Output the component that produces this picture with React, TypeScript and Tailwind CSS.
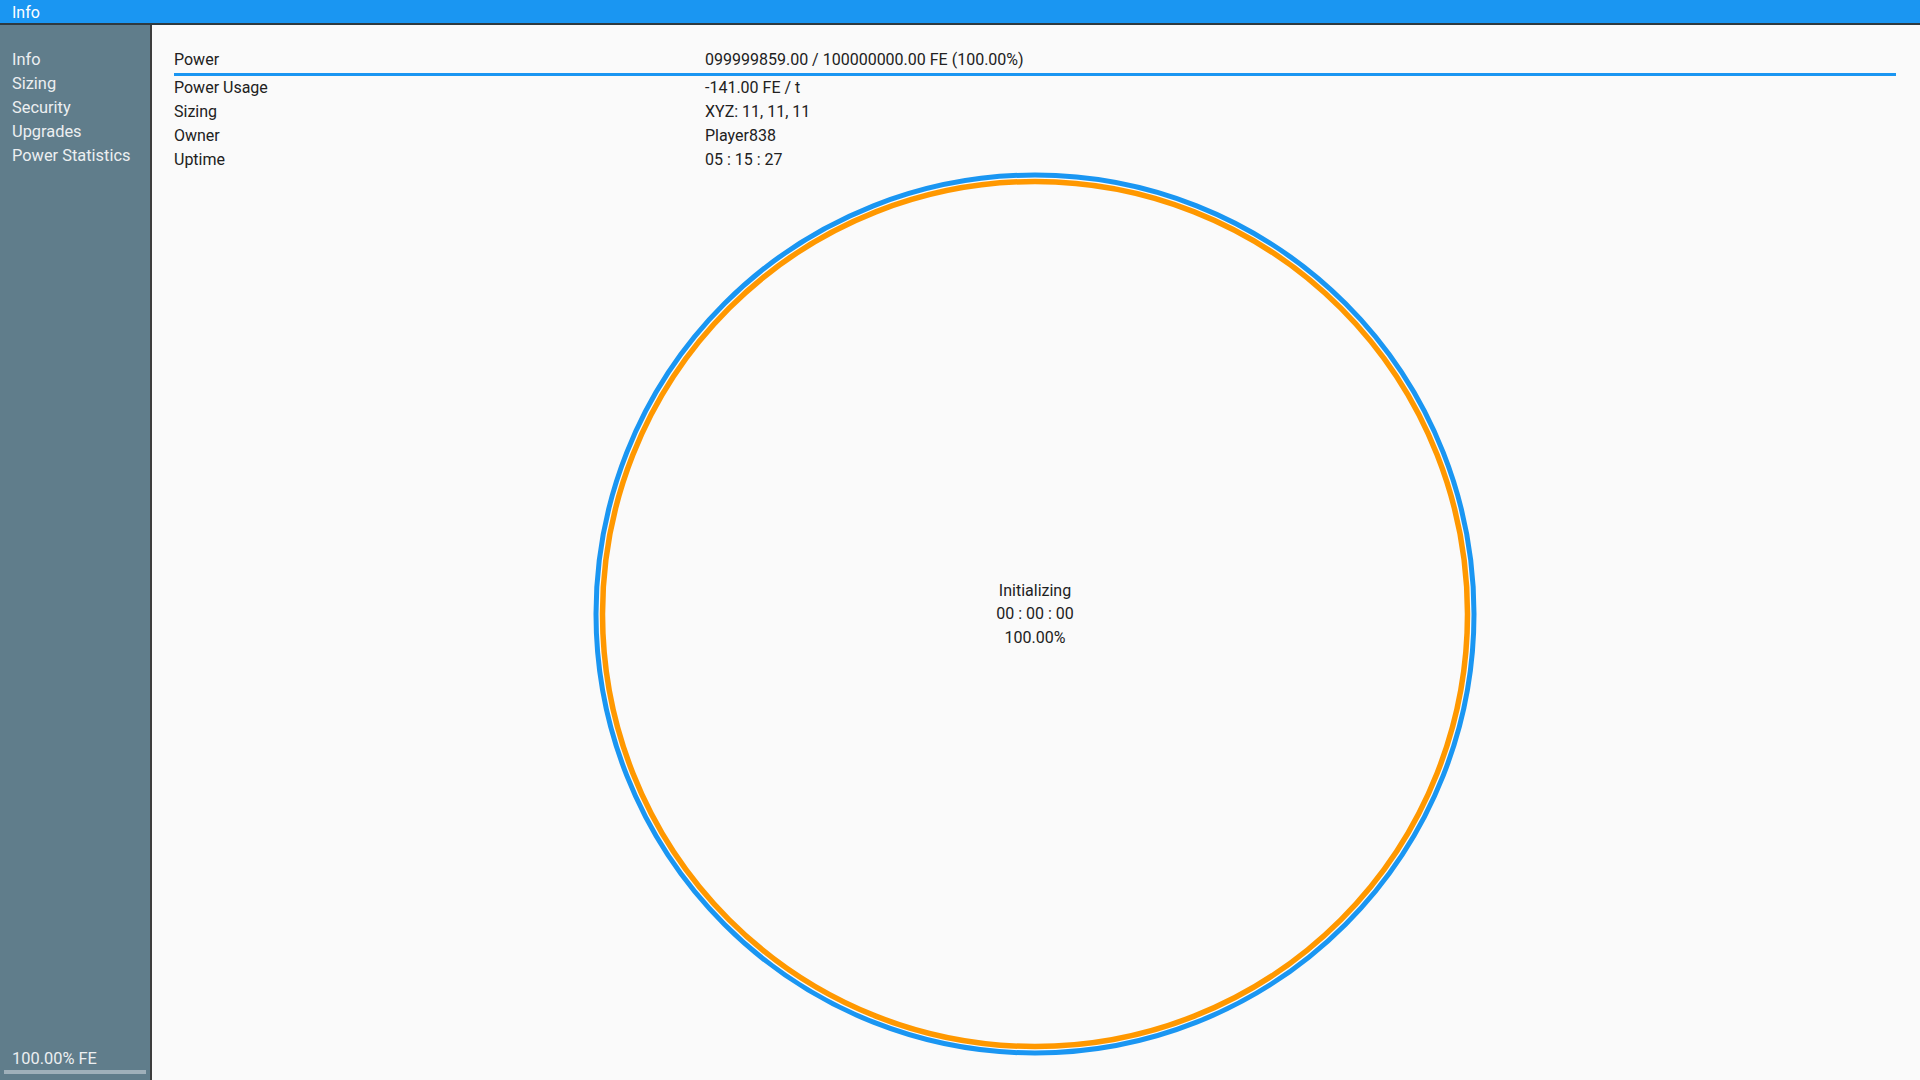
import React from 'react';

const rows = [
  { label: 'Power Usage', value: '-141.00 FE / t' },
  { label: 'Sizing', value: 'XYZ: 11, 11, 11' },
  { label: 'Owner', value: 'Player838' },
  { label: 'Uptime', value: '05 : 15 : 27' },
];

const menu = ['Info', 'Sizing', 'Security', 'Upgrades', 'Power Statistics'];

function Ring() {
  return (
    <div className="relative mx-auto h-[884px] w-[884px]">
      <svg width="884" height="884" viewBox="0 0 884 884" className="block">
        <circle cx="442" cy="442" r="439" fill="none" stroke="#1A96F2" strokeWidth="5" />
        <circle cx="442" cy="442" r="432.5" fill="none" stroke="#FF9800" strokeWidth="5.5" />
      </svg>
      <div className="absolute inset-0 flex flex-col items-center justify-center text-[16px] leading-[23.5px] text-[#212121]">
        <span>Initializing</span>
        <span>00 : 00 : 00</span>
        <span>100.00%</span>
      </div>
    </div>
  );
}

export default function App() {
  return (
    <div
      className="flex h-screen w-full flex-col overflow-hidden bg-[#FAFAFA]"
      style={{ fontFamily: 'Roboto, "Noto Sans", sans-serif' }}
    >
      {/* title bar */}
      <header className="h-[25px] shrink-0 border-b-2 border-[#2f3a40] bg-[#1A96F2] px-3 pt-[2px] text-[16px] leading-[21px] text-white">
        Info
      </header>

      <div className="flex min-h-0 flex-1">
        {/* side menu */}
        <aside className="flex w-[152px] shrink-0 flex-col justify-between border-r-2 border-[#3d3d3d] bg-[#607D8B] pt-[23px] text-[16.4px] text-[#ECEFF1]">
          <nav className="flex flex-col">
            {menu.map(item => (
              <div key={item} className="px-3 leading-[24px]">
                {item}
              </div>
            ))}
          </nav>
          <div className="pb-[6px]">
            <div className="px-3 leading-[22px]">100.00% FE</div>
            <div className="mx-[4px] h-[4px] bg-[#9FB0BA]" />
          </div>
        </aside>

        {/* info panel */}
        <main className="flex min-w-0 flex-1 flex-col pl-[22px] pr-[24px] pt-[23px] text-[16px] text-[#212121]">
          <div className="flex leading-[24px]">
            <span className="w-[531px] shrink-0">Power</span>
            <span>099999859.00 / 100000000.00 FE (100.00%)</span>
          </div>
          <div className="mt-[1px] h-[3px] bg-[#1A96F2]" />
          {rows.map(r => (
            <div key={r.label} className="flex leading-[24px]">
              <span className="w-[531px] shrink-0">{r.label}</span>
              <span>{r.value}</span>
            </div>
          ))}
          <Ring />
        </main>
      </div>
    </div>
  );
}
